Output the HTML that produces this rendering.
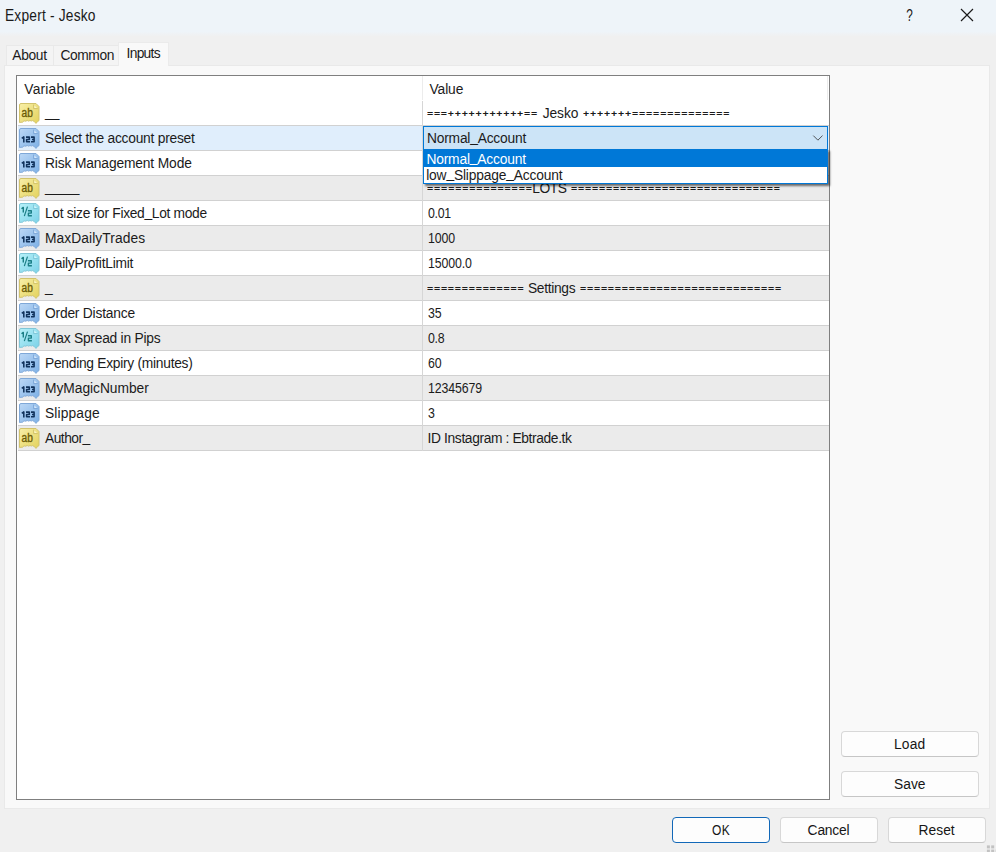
<!DOCTYPE html>
<html><head><meta charset="utf-8"><title>Expert - Jesko</title>
<style>
*{box-sizing:border-box;margin:0;padding:0}
html,body{width:996px;height:852px;overflow:hidden;background:#f0f0f0;font-family:"Liberation Sans",sans-serif;font-size:13.8px;color:#1b1b1b}
.abs{position:absolute}
#title{left:0;top:0;width:996px;height:37px;background:linear-gradient(#eef4f9 0,#eef4f9 31.5px,#f0f0f0 36.5px)}
.tx{position:absolute;white-space:nowrap;line-height:16px}
#panel{left:4px;top:65px;width:985.6px;height:744px;background:#f9f9f9;border:1px solid #e9e9e9}
.tab{position:absolute;background:#f4f4f4;border:1px solid #e9e9e9;border-bottom:none}
.tab.on{background:#f9f9f9;border-color:#ebebeb}
#list{left:16px;top:75px;width:814px;height:725px;background:#fff;border:1px solid #7f7f7f}
.row{position:absolute;left:1px;width:811px;height:25px;border-bottom:1px solid #d1d1d1}
.row.g{background:#ebebeb}
.row.sel{background:#e0eefc}
.ic{position:absolute;left:1.2px;top:2px}
.it{font-family:"Liberation Sans",sans-serif}
.u{font-style:normal;position:relative;top:-1.3px}
.vl{position:absolute;left:404px;top:0;width:1px;height:25px;background:#d6d6d6}
.btn{position:absolute;background:#fdfdfd;border:1px solid #d8d8d8;border-bottom-color:#c6c6c6;border-radius:4px}
</style></head><body>

<div id="title" class="abs"></div>
<div class="tx" id="t_title" style="left:5.3px;top:7.3px;font-size:16px;line-height:18px;color:#1a1a1a;transform:scaleX(0.86);transform-origin:0 0;letter-spacing:0.228px;">Expert - Jesko</div>
<div class="tx" style="left:905.3px;top:5.8px;font-size:16.4px;line-height:19px;color:#1a1a1a;transform:scaleX(0.72);transform-origin:50% 50%">?</div>
<svg class="abs" style="left:960px;top:8px" width="14" height="14" viewBox="0 0 14 14"><path d="M1 1 L13 13 M13 1 L1 13" stroke="#1a1a1a" stroke-width="1.15" fill="none"/></svg>
<div class="tab" style="left:6px;top:44.5px;width:48px;height:21.5px"></div>
<div class="tab" style="left:53px;top:44.5px;width:66px;height:21.5px"></div>
<div id="panel" class="abs"></div>
<div class="tab on" style="left:117.9px;top:42.4px;width:51.4px;height:24px"></div>
<div class="tx" id="t_about" style="left:12.3px;top:48px;letter-spacing:-0.337px;">About</div>
<div class="tx" id="t_common" style="left:60.6px;top:48px;letter-spacing:-0.450px;">Common</div>
<div class="tx" id="t_inputs" style="left:126.6px;top:46px;letter-spacing:-0.720px;">Inputs</div>
<div id="list" class="abs">
<div class="abs" style="left:405px;top:0;width:1px;height:24px;background:#ececec"></div>
<div class="abs" style="left:810px;top:0;width:1px;height:24px;background:#ececec"></div>
<div class="tx" id="t_hvar" style="left:7.3px;top:5.8px;letter-spacing:0.193px;">Variable</div>
<div class="tx" id="t_hval" style="left:412.5px;top:5.8px;letter-spacing:-0.113px;">Value</div>
<div class="row" style="top:25px"><svg class="ic" width="21" height="21" viewBox="0 0 21 21"><defs><linearGradient id="gab" x1="0" y1="0" x2="1" y2="1"><stop offset="0" stop-color="#f8efa8"/><stop offset="1" stop-color="#e3d25c"/></linearGradient></defs><path d="M2 0.5 H17 L20 3.5 V17.6 L18.8 18.3 L17 20.4 L15.2 18.4 L13.6 17.6 L12.4 18 L11 17.5 L9.6 18.1 L8.2 17.5 L6.6 18.2 L5 17.8 L3.4 19.3 L2 19.2 L0.5 19.6 V2 Q0.5 0.5 2 0.5 Z" fill="url(#gab)" stroke="#d2c36c" stroke-width="1"/><path d="M14.6 1.6 V5.6 H18.8" fill="none" stroke="#d2c36c" stroke-width="1"/><path d="M15.4 2.4 L18 5 H15.4 Z" fill="#fbf6c8"/><text x="2.5" y="14.0" class="it" font-size="12" fill="#6b5b05" stroke="#6b5b05" stroke-width="0.35" textLength="11.3" lengthAdjust="spacingAndGlyphs">ab</text></svg><div class="vl"></div>
<div class="tx" id="n0" style="left:27.0px;top:5px;letter-spacing:-1.000px;"><i class="u">__</i></div>
<div class="tx" id="v0" style="left:409.4px;top:5px;"><span id="v0_0" style="white-space:pre;display:inline-block;font-size:12px;font-weight:bold;transform:scale(0.88,0.72);transform-origin:0 50%;position:relative;top:-0.4px;letter-spacing:0.870px;">===+++++++++++==</span><span id="v0_1" style="white-space:pre;letter-spacing:-0.112px;margin-left:-14.40px;"> Jesko </span><span id="v0_2" style="white-space:pre;display:inline-block;font-size:12px;font-weight:bold;transform:scale(0.88,0.72);transform-origin:0 50%;position:relative;top:-0.4px;letter-spacing:0.960px;margin-left:0.80px;">+++++++==============</span></div>
</div>
<div class="row sel" style="top:50px"><svg class="ic" width="21" height="21" viewBox="0 0 21 21"><defs><linearGradient id="g123" x1="0" y1="0" x2="1" y2="1"><stop offset="0" stop-color="#bcd8f6"/><stop offset="1" stop-color="#7db0e5"/></linearGradient></defs><path d="M2 0.5 H17 L20 3.5 V17.6 L18.8 18.3 L17 20.4 L15.2 18.4 L13.6 17.6 L12.4 18 L11 17.5 L9.6 18.1 L8.2 17.5 L6.6 18.2 L5 17.8 L3.4 19.3 L2 19.2 L0.5 19.6 V2 Q0.5 0.5 2 0.5 Z" fill="url(#g123)" stroke="#7fa8d8" stroke-width="1"/><path d="M14.6 1.6 V5.6 H18.8" fill="none" stroke="#7fa8d8" stroke-width="1"/><path d="M15.4 2.4 L18 5 H15.4 Z" fill="#d6e8fb"/><g fill="none" stroke="#12335c" stroke-width="1.55" stroke-linejoin="round" transform="translate(0.1,0.5)"><path d="M2.7 9.9 L4.7 8.4 V14.1"/><path d="M6.9 8.6 H10.2 V11 H7.5 V13.3 H10.9"/><path d="M11.9 8.6 H15 V13.3 H11.9 M12.9 10.9 H15"/></g></svg><div class="vl"></div>
<div class="tx" id="n1" style="left:27.0px;top:5px;letter-spacing:-0.244px;">Select the account preset</div>
</div>
<div class="row" style="top:75px"><svg class="ic" width="21" height="21" viewBox="0 0 21 21"><defs><linearGradient id="g123" x1="0" y1="0" x2="1" y2="1"><stop offset="0" stop-color="#bcd8f6"/><stop offset="1" stop-color="#7db0e5"/></linearGradient></defs><path d="M2 0.5 H17 L20 3.5 V17.6 L18.8 18.3 L17 20.4 L15.2 18.4 L13.6 17.6 L12.4 18 L11 17.5 L9.6 18.1 L8.2 17.5 L6.6 18.2 L5 17.8 L3.4 19.3 L2 19.2 L0.5 19.6 V2 Q0.5 0.5 2 0.5 Z" fill="url(#g123)" stroke="#7fa8d8" stroke-width="1"/><path d="M14.6 1.6 V5.6 H18.8" fill="none" stroke="#7fa8d8" stroke-width="1"/><path d="M15.4 2.4 L18 5 H15.4 Z" fill="#d6e8fb"/><g fill="none" stroke="#12335c" stroke-width="1.55" stroke-linejoin="round" transform="translate(0.1,0.5)"><path d="M2.7 9.9 L4.7 8.4 V14.1"/><path d="M6.9 8.6 H10.2 V11 H7.5 V13.3 H10.9"/><path d="M11.9 8.6 H15 V13.3 H11.9 M12.9 10.9 H15"/></g></svg><div class="vl"></div>
<div class="tx" id="n2" style="left:27.0px;top:5px;letter-spacing:-0.142px;">Risk Management Mode</div>
</div>
<div class="row g" style="top:100px"><svg class="ic" width="21" height="21" viewBox="0 0 21 21"><defs><linearGradient id="gab" x1="0" y1="0" x2="1" y2="1"><stop offset="0" stop-color="#f8efa8"/><stop offset="1" stop-color="#e3d25c"/></linearGradient></defs><path d="M2 0.5 H17 L20 3.5 V17.6 L18.8 18.3 L17 20.4 L15.2 18.4 L13.6 17.6 L12.4 18 L11 17.5 L9.6 18.1 L8.2 17.5 L6.6 18.2 L5 17.8 L3.4 19.3 L2 19.2 L0.5 19.6 V2 Q0.5 0.5 2 0.5 Z" fill="url(#gab)" stroke="#d2c36c" stroke-width="1"/><path d="M14.6 1.6 V5.6 H18.8" fill="none" stroke="#d2c36c" stroke-width="1"/><path d="M15.4 2.4 L18 5 H15.4 Z" fill="#fbf6c8"/><text x="2.5" y="14.0" class="it" font-size="12" fill="#6b5b05" stroke="#6b5b05" stroke-width="0.35" textLength="11.3" lengthAdjust="spacingAndGlyphs">ab</text></svg><div class="vl"></div>
<div class="tx" id="n3" style="left:27.0px;top:5px;letter-spacing:-1.000px;"><i class="u">_____</i></div>
<div class="tx" id="v3" style="left:409.4px;top:5px;"><span id="v3_0" style="white-space:pre;display:inline-block;font-size:12px;font-weight:bold;transform:scale(0.88,0.72);transform-origin:0 50%;position:relative;top:-0.4px;letter-spacing:1.002px;">===============</span><span id="v3_1" style="white-space:pre;letter-spacing:-0.450px;margin-left:-15.20px;">LOTS </span><span id="v3_2" style="white-space:pre;display:inline-block;font-size:12px;font-weight:bold;transform:scale(0.88,0.72);transform-origin:0 50%;position:relative;top:-0.4px;letter-spacing:0.941px;margin-left:0.80px;">==============================</span></div>
</div>
<div class="row" style="top:125px"><svg class="ic" width="21" height="21" viewBox="0 0 21 21"><defs><linearGradient id="ghalf" x1="0" y1="0" x2="1" y2="1"><stop offset="0" stop-color="#b6f1f9"/><stop offset="1" stop-color="#7bd1e7"/></linearGradient></defs><path d="M2 0.5 H17 L20 3.5 V17.6 L18.8 18.3 L17 20.4 L15.2 18.4 L13.6 17.6 L12.4 18 L11 17.5 L9.6 18.1 L8.2 17.5 L6.6 18.2 L5 17.8 L3.4 19.3 L2 19.2 L0.5 19.6 V2 Q0.5 0.5 2 0.5 Z" fill="url(#ghalf)" stroke="#7fc6d8" stroke-width="1"/><path d="M14.6 1.6 V5.6 H18.8" fill="none" stroke="#7fc6d8" stroke-width="1"/><path d="M15.4 2.4 L18 5 H15.4 Z" fill="#d4f6fb"/><g fill="none" stroke="#1b7f86" stroke-linejoin="round"><path d="M2.5 5.8 L4.3 4.4 V9.6" stroke-width="1.4"/><path d="M8.5 3.6 L5.3 13.1" stroke-width="1.2"/><path d="M8.9 7.7 H12.3 V10.1 H9.4 V12.7 H12.9" stroke-width="1.4"/></g></svg><div class="vl"></div>
<div class="tx" id="n4" style="left:27.0px;top:5px;letter-spacing:-0.312px;">Lot size for Fixed<i class="u">_</i>Lot mode</div>
<div class="tx" id="v4" style="left:409.6px;top:5px;transform:scaleX(0.895);transform-origin:0 0;"><span id="v4_0" style="white-space:pre;letter-spacing:-0.300px;">0.01</span></div>
</div>
<div class="row g" style="top:150px"><svg class="ic" width="21" height="21" viewBox="0 0 21 21"><defs><linearGradient id="g123" x1="0" y1="0" x2="1" y2="1"><stop offset="0" stop-color="#bcd8f6"/><stop offset="1" stop-color="#7db0e5"/></linearGradient></defs><path d="M2 0.5 H17 L20 3.5 V17.6 L18.8 18.3 L17 20.4 L15.2 18.4 L13.6 17.6 L12.4 18 L11 17.5 L9.6 18.1 L8.2 17.5 L6.6 18.2 L5 17.8 L3.4 19.3 L2 19.2 L0.5 19.6 V2 Q0.5 0.5 2 0.5 Z" fill="url(#g123)" stroke="#7fa8d8" stroke-width="1"/><path d="M14.6 1.6 V5.6 H18.8" fill="none" stroke="#7fa8d8" stroke-width="1"/><path d="M15.4 2.4 L18 5 H15.4 Z" fill="#d6e8fb"/><g fill="none" stroke="#12335c" stroke-width="1.55" stroke-linejoin="round" transform="translate(0.1,0.5)"><path d="M2.7 9.9 L4.7 8.4 V14.1"/><path d="M6.9 8.6 H10.2 V11 H7.5 V13.3 H10.9"/><path d="M11.9 8.6 H15 V13.3 H11.9 M12.9 10.9 H15"/></g></svg><div class="vl"></div>
<div class="tx" id="n5" style="left:27.0px;top:5px;letter-spacing:0.069px;">MaxDailyTrades</div>
<div class="tx" id="v5" style="left:409.6px;top:5px;transform:scaleX(0.895);transform-origin:0 0;"><span id="v5_0" style="white-space:pre;letter-spacing:-0.150px;">1000</span></div>
</div>
<div class="row" style="top:175px"><svg class="ic" width="21" height="21" viewBox="0 0 21 21"><defs><linearGradient id="ghalf" x1="0" y1="0" x2="1" y2="1"><stop offset="0" stop-color="#b6f1f9"/><stop offset="1" stop-color="#7bd1e7"/></linearGradient></defs><path d="M2 0.5 H17 L20 3.5 V17.6 L18.8 18.3 L17 20.4 L15.2 18.4 L13.6 17.6 L12.4 18 L11 17.5 L9.6 18.1 L8.2 17.5 L6.6 18.2 L5 17.8 L3.4 19.3 L2 19.2 L0.5 19.6 V2 Q0.5 0.5 2 0.5 Z" fill="url(#ghalf)" stroke="#7fc6d8" stroke-width="1"/><path d="M14.6 1.6 V5.6 H18.8" fill="none" stroke="#7fc6d8" stroke-width="1"/><path d="M15.4 2.4 L18 5 H15.4 Z" fill="#d4f6fb"/><g fill="none" stroke="#1b7f86" stroke-linejoin="round"><path d="M2.5 5.8 L4.3 4.4 V9.6" stroke-width="1.4"/><path d="M8.5 3.6 L5.3 13.1" stroke-width="1.2"/><path d="M8.9 7.7 H12.3 V10.1 H9.4 V12.7 H12.9" stroke-width="1.4"/></g></svg><div class="vl"></div>
<div class="tx" id="n6" style="left:27.0px;top:5px;letter-spacing:-0.240px;">DailyProfitLimit</div>
<div class="tx" id="v6" style="left:409.6px;top:5px;transform:scaleX(0.895);transform-origin:0 0;"><span id="v6_0" style="white-space:pre;letter-spacing:-0.150px;">15000.0</span></div>
</div>
<div class="row g" style="top:200px"><svg class="ic" width="21" height="21" viewBox="0 0 21 21"><defs><linearGradient id="gab" x1="0" y1="0" x2="1" y2="1"><stop offset="0" stop-color="#f8efa8"/><stop offset="1" stop-color="#e3d25c"/></linearGradient></defs><path d="M2 0.5 H17 L20 3.5 V17.6 L18.8 18.3 L17 20.4 L15.2 18.4 L13.6 17.6 L12.4 18 L11 17.5 L9.6 18.1 L8.2 17.5 L6.6 18.2 L5 17.8 L3.4 19.3 L2 19.2 L0.5 19.6 V2 Q0.5 0.5 2 0.5 Z" fill="url(#gab)" stroke="#d2c36c" stroke-width="1"/><path d="M14.6 1.6 V5.6 H18.8" fill="none" stroke="#d2c36c" stroke-width="1"/><path d="M15.4 2.4 L18 5 H15.4 Z" fill="#fbf6c8"/><text x="2.5" y="14.0" class="it" font-size="12" fill="#6b5b05" stroke="#6b5b05" stroke-width="0.35" textLength="11.3" lengthAdjust="spacingAndGlyphs">ab</text></svg><div class="vl"></div>
<div class="tx" id="n7" style="left:27.0px;top:5px;"><i class="u">_</i></div>
<div class="tx" id="v7" style="left:409.4px;top:5px;"><span id="v7_0" style="white-space:pre;display:inline-block;font-size:12px;font-weight:bold;transform:scale(0.88,0.72);transform-origin:0 50%;position:relative;top:-0.4px;letter-spacing:0.894px;">==============</span><span id="v7_1" style="white-space:pre;letter-spacing:-0.321px;margin-left:-13.60px;"> Settings </span><span id="v7_2" style="white-space:pre;display:inline-block;font-size:12px;font-weight:bold;transform:scale(0.88,0.72);transform-origin:0 50%;position:relative;top:-0.4px;letter-spacing:0.905px;margin-left:0.80px;">=============================</span></div>
</div>
<div class="row" style="top:225px"><svg class="ic" width="21" height="21" viewBox="0 0 21 21"><defs><linearGradient id="g123" x1="0" y1="0" x2="1" y2="1"><stop offset="0" stop-color="#bcd8f6"/><stop offset="1" stop-color="#7db0e5"/></linearGradient></defs><path d="M2 0.5 H17 L20 3.5 V17.6 L18.8 18.3 L17 20.4 L15.2 18.4 L13.6 17.6 L12.4 18 L11 17.5 L9.6 18.1 L8.2 17.5 L6.6 18.2 L5 17.8 L3.4 19.3 L2 19.2 L0.5 19.6 V2 Q0.5 0.5 2 0.5 Z" fill="url(#g123)" stroke="#7fa8d8" stroke-width="1"/><path d="M14.6 1.6 V5.6 H18.8" fill="none" stroke="#7fa8d8" stroke-width="1"/><path d="M15.4 2.4 L18 5 H15.4 Z" fill="#d6e8fb"/><g fill="none" stroke="#12335c" stroke-width="1.55" stroke-linejoin="round" transform="translate(0.1,0.5)"><path d="M2.7 9.9 L4.7 8.4 V14.1"/><path d="M6.9 8.6 H10.2 V11 H7.5 V13.3 H10.9"/><path d="M11.9 8.6 H15 V13.3 H11.9 M12.9 10.9 H15"/></g></svg><div class="vl"></div>
<div class="tx" id="n8" style="left:27.0px;top:5px;letter-spacing:-0.208px;">Order Distance</div>
<div class="tx" id="v8" style="left:409.6px;top:5px;transform:scaleX(0.895);transform-origin:0 0;"><span id="v8_0" style="white-space:pre;letter-spacing:-0.150px;">35</span></div>
</div>
<div class="row g" style="top:250px"><svg class="ic" width="21" height="21" viewBox="0 0 21 21"><defs><linearGradient id="ghalf" x1="0" y1="0" x2="1" y2="1"><stop offset="0" stop-color="#b6f1f9"/><stop offset="1" stop-color="#7bd1e7"/></linearGradient></defs><path d="M2 0.5 H17 L20 3.5 V17.6 L18.8 18.3 L17 20.4 L15.2 18.4 L13.6 17.6 L12.4 18 L11 17.5 L9.6 18.1 L8.2 17.5 L6.6 18.2 L5 17.8 L3.4 19.3 L2 19.2 L0.5 19.6 V2 Q0.5 0.5 2 0.5 Z" fill="url(#ghalf)" stroke="#7fc6d8" stroke-width="1"/><path d="M14.6 1.6 V5.6 H18.8" fill="none" stroke="#7fc6d8" stroke-width="1"/><path d="M15.4 2.4 L18 5 H15.4 Z" fill="#d4f6fb"/><g fill="none" stroke="#1b7f86" stroke-linejoin="round"><path d="M2.5 5.8 L4.3 4.4 V9.6" stroke-width="1.4"/><path d="M8.5 3.6 L5.3 13.1" stroke-width="1.2"/><path d="M8.9 7.7 H12.3 V10.1 H9.4 V12.7 H12.9" stroke-width="1.4"/></g></svg><div class="vl"></div>
<div class="tx" id="n9" style="left:27.0px;top:5px;letter-spacing:-0.238px;">Max Spread in Pips</div>
<div class="tx" id="v9" style="left:409.6px;top:5px;transform:scaleX(0.895);transform-origin:0 0;"><span id="v9_0" style="white-space:pre;letter-spacing:-0.300px;">0.8</span></div>
</div>
<div class="row" style="top:275px"><svg class="ic" width="21" height="21" viewBox="0 0 21 21"><defs><linearGradient id="g123" x1="0" y1="0" x2="1" y2="1"><stop offset="0" stop-color="#bcd8f6"/><stop offset="1" stop-color="#7db0e5"/></linearGradient></defs><path d="M2 0.5 H17 L20 3.5 V17.6 L18.8 18.3 L17 20.4 L15.2 18.4 L13.6 17.6 L12.4 18 L11 17.5 L9.6 18.1 L8.2 17.5 L6.6 18.2 L5 17.8 L3.4 19.3 L2 19.2 L0.5 19.6 V2 Q0.5 0.5 2 0.5 Z" fill="url(#g123)" stroke="#7fa8d8" stroke-width="1"/><path d="M14.6 1.6 V5.6 H18.8" fill="none" stroke="#7fa8d8" stroke-width="1"/><path d="M15.4 2.4 L18 5 H15.4 Z" fill="#d6e8fb"/><g fill="none" stroke="#12335c" stroke-width="1.55" stroke-linejoin="round" transform="translate(0.1,0.5)"><path d="M2.7 9.9 L4.7 8.4 V14.1"/><path d="M6.9 8.6 H10.2 V11 H7.5 V13.3 H10.9"/><path d="M11.9 8.6 H15 V13.3 H11.9 M12.9 10.9 H15"/></g></svg><div class="vl"></div>
<div class="tx" id="n10" style="left:27.0px;top:5px;letter-spacing:-0.274px;">Pending Expiry (minutes)</div>
<div class="tx" id="v10" style="left:409.6px;top:5px;transform:scaleX(0.895);transform-origin:0 0;"><span id="v10_0" style="white-space:pre;letter-spacing:-0.150px;">60</span></div>
</div>
<div class="row g" style="top:300px"><svg class="ic" width="21" height="21" viewBox="0 0 21 21"><defs><linearGradient id="g123" x1="0" y1="0" x2="1" y2="1"><stop offset="0" stop-color="#bcd8f6"/><stop offset="1" stop-color="#7db0e5"/></linearGradient></defs><path d="M2 0.5 H17 L20 3.5 V17.6 L18.8 18.3 L17 20.4 L15.2 18.4 L13.6 17.6 L12.4 18 L11 17.5 L9.6 18.1 L8.2 17.5 L6.6 18.2 L5 17.8 L3.4 19.3 L2 19.2 L0.5 19.6 V2 Q0.5 0.5 2 0.5 Z" fill="url(#g123)" stroke="#7fa8d8" stroke-width="1"/><path d="M14.6 1.6 V5.6 H18.8" fill="none" stroke="#7fa8d8" stroke-width="1"/><path d="M15.4 2.4 L18 5 H15.4 Z" fill="#d6e8fb"/><g fill="none" stroke="#12335c" stroke-width="1.55" stroke-linejoin="round" transform="translate(0.1,0.5)"><path d="M2.7 9.9 L4.7 8.4 V14.1"/><path d="M6.9 8.6 H10.2 V11 H7.5 V13.3 H10.9"/><path d="M11.9 8.6 H15 V13.3 H11.9 M12.9 10.9 H15"/></g></svg><div class="vl"></div>
<div class="tx" id="n11" style="left:27.0px;top:5px;letter-spacing:-0.038px;">MyMagicNumber</div>
<div class="tx" id="v11" style="left:409.6px;top:5px;transform:scaleX(0.895);transform-origin:0 0;"><span id="v11_0" style="white-space:pre;letter-spacing:-0.150px;">12345679</span></div>
</div>
<div class="row" style="top:325px"><svg class="ic" width="21" height="21" viewBox="0 0 21 21"><defs><linearGradient id="g123" x1="0" y1="0" x2="1" y2="1"><stop offset="0" stop-color="#bcd8f6"/><stop offset="1" stop-color="#7db0e5"/></linearGradient></defs><path d="M2 0.5 H17 L20 3.5 V17.6 L18.8 18.3 L17 20.4 L15.2 18.4 L13.6 17.6 L12.4 18 L11 17.5 L9.6 18.1 L8.2 17.5 L6.6 18.2 L5 17.8 L3.4 19.3 L2 19.2 L0.5 19.6 V2 Q0.5 0.5 2 0.5 Z" fill="url(#g123)" stroke="#7fa8d8" stroke-width="1"/><path d="M14.6 1.6 V5.6 H18.8" fill="none" stroke="#7fa8d8" stroke-width="1"/><path d="M15.4 2.4 L18 5 H15.4 Z" fill="#d6e8fb"/><g fill="none" stroke="#12335c" stroke-width="1.55" stroke-linejoin="round" transform="translate(0.1,0.5)"><path d="M2.7 9.9 L4.7 8.4 V14.1"/><path d="M6.9 8.6 H10.2 V11 H7.5 V13.3 H10.9"/><path d="M11.9 8.6 H15 V13.3 H11.9 M12.9 10.9 H15"/></g></svg><div class="vl"></div>
<div class="tx" id="n12" style="left:27.0px;top:5px;letter-spacing:0.129px;">Slippage</div>
<div class="tx" id="v12" style="left:409.6px;top:5px;transform:scaleX(0.895);transform-origin:0 0;"><span id="v12_0" style="white-space:pre;letter-spacing:-0.150px;">3</span></div>
</div>
<div class="row g" style="top:350px"><svg class="ic" width="21" height="21" viewBox="0 0 21 21"><defs><linearGradient id="gab" x1="0" y1="0" x2="1" y2="1"><stop offset="0" stop-color="#f8efa8"/><stop offset="1" stop-color="#e3d25c"/></linearGradient></defs><path d="M2 0.5 H17 L20 3.5 V17.6 L18.8 18.3 L17 20.4 L15.2 18.4 L13.6 17.6 L12.4 18 L11 17.5 L9.6 18.1 L8.2 17.5 L6.6 18.2 L5 17.8 L3.4 19.3 L2 19.2 L0.5 19.6 V2 Q0.5 0.5 2 0.5 Z" fill="url(#gab)" stroke="#d2c36c" stroke-width="1"/><path d="M14.6 1.6 V5.6 H18.8" fill="none" stroke="#d2c36c" stroke-width="1"/><path d="M15.4 2.4 L18 5 H15.4 Z" fill="#fbf6c8"/><text x="2.5" y="14.0" class="it" font-size="12" fill="#6b5b05" stroke="#6b5b05" stroke-width="0.35" textLength="11.3" lengthAdjust="spacingAndGlyphs">ab</text></svg><div class="vl"></div>
<div class="tx" id="n13" style="left:27.0px;top:5px;letter-spacing:-0.525px;">Author<i class="u">_</i></div>
<div class="tx" id="v13" style="left:409.6px;top:5px;"><span id="v13_0" style="white-space:pre;letter-spacing:-0.375px;">ID Instagram : Ebtrade.tk</span></div>
</div>
</div>
<div class="abs" style="left:423px;top:126px;width:405px;height:24px;background:#cce4f7;border:1px solid #0078d7"></div>
<div class="tx" id="t_combo" style="left:427px;top:131px;letter-spacing:-0.208px;">Normal<i class="u">_</i>Account</div>
<svg class="abs" style="left:812px;top:134px" width="12" height="8" viewBox="0 0 12 8"><path d="M1.3 1.6 L5.9 6.2 L10.5 1.6" stroke="#50555a" stroke-width="1" fill="none"/></svg>
<div class="abs" style="left:423px;top:149px;width:405px;height:35px;background:#fff;border:1px solid #0078d7;box-shadow:1.5px 2px 2px rgba(0,0,0,0.55)"></div>
<div class="abs" style="left:424px;top:150px;width:403px;height:16.5px;background:#0078d7"></div>
<div class="tx" id="t_dd1" style="left:426.4px;top:151.75px;color:#fff;letter-spacing:-0.173px;">Normal<i class="u">_</i>Account</div>
<div class="tx" id="t_dd2" style="left:426.2px;top:167.5px;letter-spacing:-0.166px;">low<i class="u">_</i>Slippage<i class="u">_</i>Account</div>
<div class="btn" style="left:841px;top:731px;width:138px;height:26px;"></div>
<div class="tx" id="b_load" style="left:894px;top:737.1px;font-size:13.8px;color:#161616;letter-spacing:0.150px;">Load</div>
<div class="btn" style="left:841px;top:771px;width:138px;height:26px;"></div>
<div class="tx" id="b_save" style="left:894px;top:777.1px;font-size:13.8px;color:#161616;">Save</div>
<div class="btn" style="left:672px;top:817px;width:98px;height:26px;border-color:#1268b8;"></div>
<div class="tx" id="b_ok" style="left:712.2px;top:823.1px;font-size:13.8px;color:#161616;transform:scaleX(0.87);transform-origin:0 0;letter-spacing:0.500px;">OK</div>
<div class="btn" style="left:780px;top:817px;width:98px;height:26px;"></div>
<div class="tx" id="b_cancel" style="left:807.6px;top:823.1px;font-size:13.8px;color:#161616;letter-spacing:-0.180px;">Cancel</div>
<div class="btn" style="left:888px;top:817px;width:98px;height:26px;"></div>
<div class="tx" id="b_reset" style="left:918.6px;top:823.1px;font-size:13.8px;color:#161616;">Reset</div>
<svg class="abs" style="left:984px;top:842px" width="12" height="10" viewBox="0 0 12 10"><g fill="#c2c2c2"><rect x="2.9" y="3.4" width="3" height="3"/><rect x="7.2" y="3.4" width="3" height="3"/><rect x="2.9" y="7.6" width="3" height="3"/><rect x="7.2" y="7.6" width="3" height="3"/><rect x="11.4" y="7.6" width="3" height="3" fill="#d6d6d6"/></g></svg>
</body></html>
